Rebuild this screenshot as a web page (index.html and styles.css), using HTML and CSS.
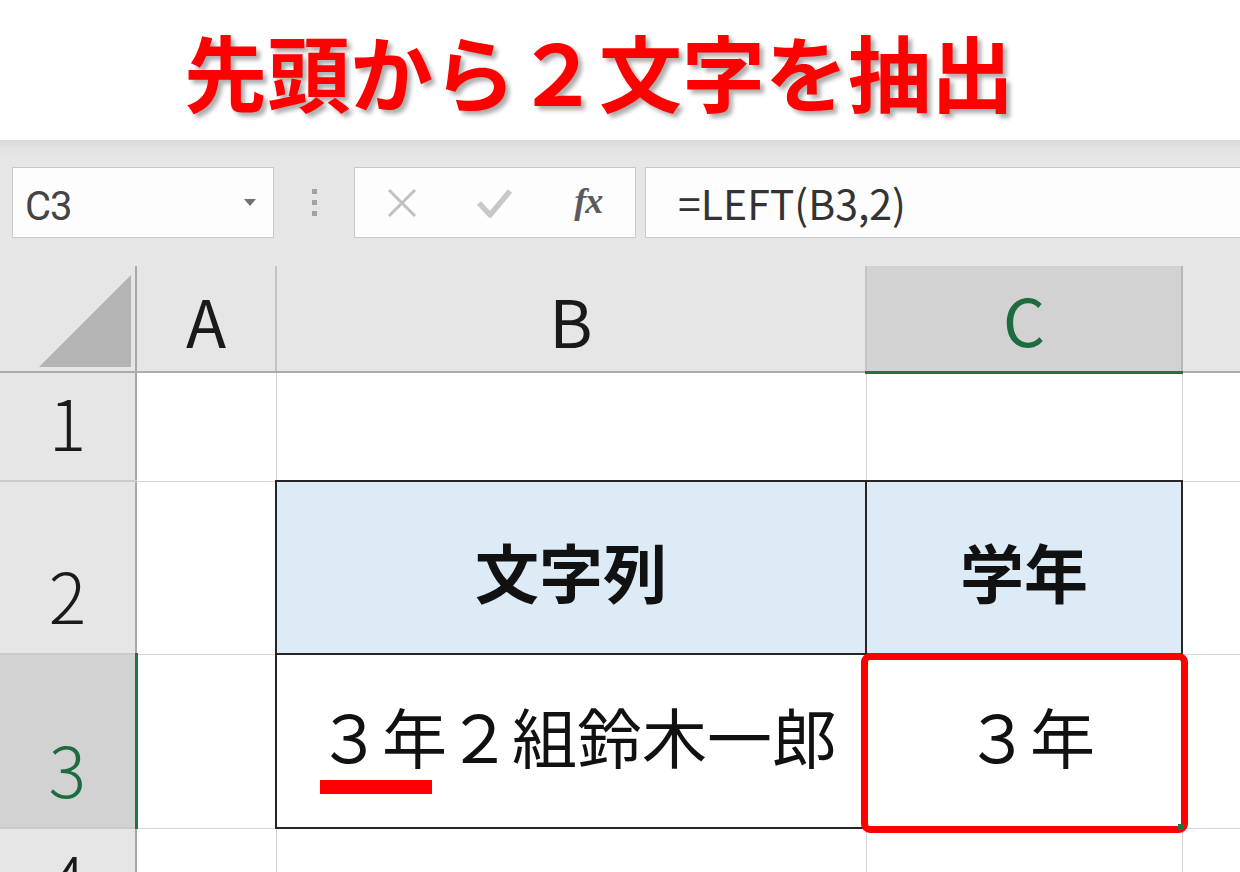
FILE: index.html
```html
<!DOCTYPE html>
<html lang="ja">
<head>
<meta charset="utf-8">
<title>LEFT関数</title>
<link rel="stylesheet" href="styles.css">
</head>
<body>
<div class="title">先頭から２文字を抽出</div>
<div class="toolbar">
  <div class="namebox"><span class="ref">C3</span><span class="caret"></span></div>
  <div class="grip"><i></i><i></i><i></i></div>
  <div class="btns">
    <svg class="ic" width="32" height="30" viewBox="0 0 32 30"><path d="M3 2 L29 28 M29 2 L3 28" stroke="#c0c0c0" stroke-width="3" fill="none"/></svg>
    <svg class="ic" width="38" height="32" viewBox="0 0 38 32"><path d="M3 16 L14 28 L34 4" stroke="#c8c8c8" stroke-width="5.5" fill="none" stroke-linejoin="round"/></svg>
    <span class="fx">fx</span>
  </div>
  <div class="formula">=LEFT(B3,2)</div>
</div>
<table class="sheet">
  <colgroup>
    <col class="c-rh"><col class="c-a"><col class="c-b"><col class="c-c"><col class="c-rest">
  </colgroup>
  <tr class="hrow">
    <th class="corner"><svg width="92" height="92" viewBox="0 0 92 92"><path d="M92 0 L92 92 L0 92 Z" fill="#b4b4b4"/></svg></th>
    <th class="ch">A</th>
    <th class="ch">B</th>
    <th class="ch sel">C</th>
    <th class="ch rest"></th>
  </tr>
  <tr class="row1">
    <th class="rh">1</th><td></td><td></td><td></td><td class="rest"></td>
  </tr>
  <tr class="row2">
    <th class="rh">2</th><td></td><td class="tb head">文字列</td><td class="tb head">学年</td><td class="rest"></td>
  </tr>
  <tr class="row3">
    <th class="rh sel">3</th><td></td>
    <td class="tb val left"><span class="mark">３年</span>２組鈴木一郎</td>
    <td class="tb val active"><span class="res">３年</span><span class="redbox"></span><span class="handle"></span></td>
    <td class="rest"></td>
  </tr>
  <tr class="row4">
    <th class="rh">4</th><td></td><td></td><td></td><td class="rest"></td>
  </tr>
</table>
</body>
</html>
```

FILE: styles.css
```css
html, body {
  margin: 0;
  padding: 0;
}
body {
  width: 1240px;
  height: 872px;
  overflow: hidden;
  background: #ffffff;
  font-family: "Noto Sans CJK JP", sans-serif;
}

.title {
  height: 140px;
  display: flex;
  align-items: center;
  padding-left: 184px;
  box-sizing: border-box;
  font-size: 83px;
  font-weight: 700;
  color: #ff0000;
  text-shadow: 4px 4px 4px rgba(0, 0, 0, 0.32);
  line-height: 1;
}

.toolbar {
  height: 126px;
  box-sizing: border-box;
  padding-top: 27px;
  background: linear-gradient(#d8d8d8 0px, #e3e3e3 8px, #e6e6e6 16px);
  display: flex;
  align-items: flex-start;
}
.namebox, .btns, .formula {
  height: 71px;
  box-sizing: border-box;
  border: 1px solid #c9c9c9;
  background: #fdfdfd;
}
.namebox {
  margin-left: 12px;
  width: 262px;
  display: flex;
  align-items: center;
  justify-content: space-between;
  padding: 8px 17px 0 12px;
}
.ref {
  font-family: Roboto, "Liberation Sans", sans-serif;
  font-size: 40px;
  color: #444444;
  font-weight: 400;
  letter-spacing: -1px;
}
.caret {
  width: 0;
  height: 0;
  border-left: 6px solid transparent;
  border-right: 6px solid transparent;
  border-top: 7px solid #707070;
  margin-top: -8px;
}
.grip {
  width: 80px;
  height: 71px;
  display: flex;
  flex-direction: column;
  align-items: center;
  justify-content: center;
  gap: 6px;
  padding-left: 1px;
  box-sizing: border-box;
}
.grip i {
  display: block;
  width: 5px;
  height: 5px;
  background: #a2a2a2;
}
.btns {
  width: 282px;
  display: grid;
  grid-template-columns: repeat(3, 1fr);
  place-items: center;
}
.ic {
  display: block;
}
.fx {
  font-family: "Liberation Serif", serif;
  font-style: italic;
  font-weight: 700;
  font-size: 36px;
  color: #5a5a5a;
  letter-spacing: -1px;
  margin-top: -4px;
}
.formula {
  flex: 1;
  margin-left: 9px;
  border-right: none;
  padding-left: 32px;
  display: flex;
  align-items: center;
  font-size: 41px;
  color: #333333;
  font-weight: 400;
  line-height: 1;
}

.sheet {
  border-collapse: collapse;
  table-layout: fixed;
  width: 1240px;
}
.c-rh { width: 136px; }
.c-a { width: 140px; }
.c-b { width: 590px; }
.c-c { width: 316px; }
.c-rest { width: 58px; }

.sheet th, .sheet td {
  padding: 0;
  border: 1px solid #d6d6d6;
  border-top: 0;
  box-sizing: border-box;
}
.sheet td.rest, .sheet th.rest {
  border-right: 0;
}

.hrow th {
  height: 106px;
  background: #e6e6e6;
  border-left: 2px solid #c4c4c4;
  border-right: 2px solid #c4c4c4;
  border-bottom: 2px solid #ababab;
  font-weight: 400;
  font-size: 66px;
  color: #1a1a1a;
  line-height: 1;
  vertical-align: middle;
  font-family: "Noto Sans CJK JP", sans-serif;
}
.hrow th.corner {
  border-left: 0;
  border-right: 2px solid #a8a8a8;
  text-align: right;
  vertical-align: bottom;
  padding: 0 4px 4px 0;
}
.corner svg {
  display: block;
  margin-left: auto;
}
.hrow th.sel {
  background: #d2d2d2;
  color: #1e6b3f;
  border-bottom: 3px solid #217346;
  border-right-color: #b8b8b8;
}

.rh {
  background: #e6e6e6;
  border-left: 0 !important;
  border-right: 2px solid #a8a8a8 !important;
  border-bottom: 2px solid #cbcbcb !important;
  font-weight: 300;
  font-size: 70px;
  line-height: 1;
  color: #1a1a1a;
  vertical-align: bottom;
  padding-bottom: 24px !important;
  text-align: center;
}
.rh.sel {
  background: #d2d2d2;
  color: #1e6b3f;
  border-right: 3px solid #217346 !important;
}

.row1 th, .row1 td { height: 109px; }
.row2 th, .row2 td { height: 173px; }
.row3 th, .row3 td { height: 174px; }
.row4 th, .row4 td { height: 110px; }

.sheet td.tb {
  border: 2px solid #262626;
  text-align: center;
  vertical-align: middle;
  line-height: 1;
  color: #111111;
}
.sheet td.head {
  background: #ddebf7;
  font-weight: 700;
  font-size: 64px;
  padding-top: 4px;
}
.sheet td.val {
  font-size: 65px;
  font-weight: 400;
  padding-bottom: 12px;
}
.sheet td.left {
  text-align: left;
  padding-left: 40px;
}
.mark {
  position: relative;
}
.mark::after {
  content: "";
  position: absolute;
  left: 3px;
  width: 112px;
  top: 100%;
  margin-top: -2px;
  height: 14px;
  background: #ff0000;
}
.active {
  position: relative;
}
.res {
  padding-left: 12px;
}
.redbox {
  position: absolute;
  left: -6px;
  right: -7px;
  top: -2px;
  bottom: -6px;
  border: 7px solid #ff0000;
  border-radius: 9px;
}
.handle {
  position: absolute;
  right: -3px;
  bottom: -3px;
  width: 6px;
  height: 6px;
  background: #217346;
}
```
